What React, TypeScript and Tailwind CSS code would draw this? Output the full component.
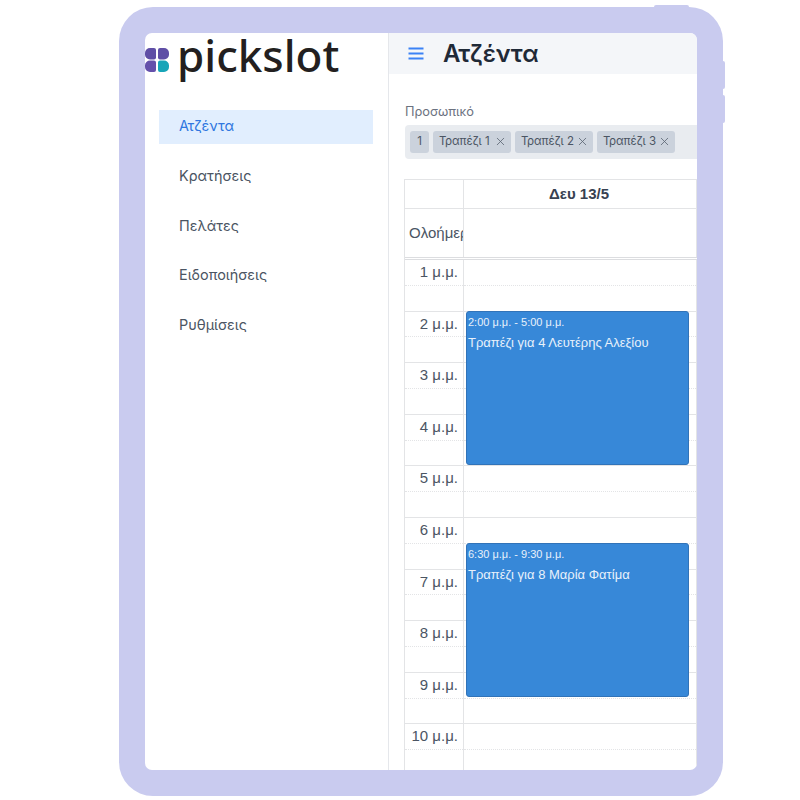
import { X } from "lucide-react";

const navItems = ["Ατζέντα", "Κρατήσεις", "Πελάτες", "Ειδοποιήσεις", "Ρυθμίσεις"];
const chips = ["Τραπέζι 1", "Τραπέζι 2", "Τραπέζι 3"];
const hours = ["1", "2", "3", "4", "5", "6", "7", "8", "9", "10"];

function Logo() {
  return (
    <div className="flex h-[54px] items-start">
      <svg width="24" height="26" viewBox="0 0 24 26" className="mr-[8px] mt-[14px] shrink-0">
        <path d="M0 6a5 5 0 0 1 5-5h4a2 2 0 0 1 2 2v7.5a2 2 0 0 1-2 2H5a5 5 0 0 1-5-5z" fill="#5f4ea6" />
        <path d="M24 6a5 5 0 0 0-5-5h-4a2 2 0 0 0-2 2v7.5a2 2 0 0 0 2 2h4a5 5 0 0 0 5-5z" fill="#5f4ea6" />
        <path d="M0 20a5 5 0 0 0 5 5h4a2 2 0 0 0 2-2v-7.5a2 2 0 0 0-2-2H5a5 5 0 0 0-5 5z" fill="#6450ab" />
        <path d="M24 20a5 5 0 0 1-5 5h-4a2 2 0 0 1-2-2v-7.5a2 2 0 0 1 2-2h4a5 5 0 0 1 5 5z" fill="#17a5b8" />
      </svg>
      <span className="font-['Noto_Sans',sans-serif] text-[44px] font-medium leading-[45px] text-[#231f20]">pickslot</span>
    </div>
  );
}

function EventCard({ time, title, top }: { time: string; title: string; top: string }) {
  return (
    <div className={`absolute left-[2px] ${top} h-[154px] w-[223px] rounded-[3px] border border-[#3173b8] bg-[#3788d8] px-[1px] text-[#e8f1fb]`}>
      <div className="mt-[3px] text-[11px] leading-[14px]">{time}</div>
      <div className="mt-[5px] text-[13px] leading-[17px]">{title}</div>
    </div>
  );
}

export default function App() {
  return (
    <div className="relative ml-[119px] mt-[7px] h-[789px] w-[604px] rounded-[34px] bg-[#c9cbef] p-[26px]">
      <div className="absolute left-[535px] top-[-2px] h-[3px] w-[35px] rounded-t-[2px] bg-[#c9cbef]" />
      <div className="absolute right-[-2px] top-[54px] h-[28px] w-[3px] rounded-r-[2px] bg-[#c9cbef]" />
      <div className="absolute right-[-2px] top-[88px] h-[28px] w-[3px] rounded-r-[2px] bg-[#c9cbef]" />

      <div className="flex h-[737px] w-[552px] overflow-hidden rounded-[7px] bg-white font-['Inter',sans-serif]">
        <aside className="w-[244px] shrink-0 border-r border-[#e5e7eb]">
          <Logo />
          <nav className="mt-[23px] flex flex-col gap-[15.7px] pl-[14px] pr-[15px]">
            {navItems.map((item, index) => (
              <div
                key={item}
                className={`flex h-[34px] items-center pb-[2px] pl-[20px] text-[14.4px] ${
                  index === 0 ? "bg-[#e1eefe] text-[#2f76e0]" : "text-[#4b5563]"
                }`}
              >
                {item}
              </div>
            ))}
          </nav>
        </aside>

        <main className="min-w-0 flex-1">
          <header className="flex h-[41px] items-center bg-[#f4f6f9] pl-[19px]">
            <svg width="16" height="13" viewBox="0 0 16 13" className="mr-[19px]">
              <path d="M0.5 1.5h15M0.5 6.5h15M0.5 11.5h15" stroke="#3b82f6" strokeWidth="2" />
            </svg>
            <h1 className="text-[24px] font-semibold leading-none text-[#1f2937]">Ατζέντα</h1>
          </header>

          <div className="pl-[16px]">
            <div className="mt-[30px] text-[12.8px] leading-[16px] text-[#6b7280]">Προσωπικό</div>
            <div className="mt-[5px] flex h-[34px] items-center gap-[4px] rounded-l-[4px] bg-[#e9ecf0] pl-[5px] text-[11.5px] text-[#4b5563]">
              <span className="flex h-[22px] w-[19px] items-center justify-center rounded-[3px] bg-[#cbd2dc]">1</span>
              {chips.map((chip) => (
                <span key={chip} className="flex h-[22px] w-[78px] items-center justify-between rounded-[3px] bg-[#cbd2dc] pl-[6px] pr-[4px]">
                  {chip}
                  <X size={13} strokeWidth={1.5} className="mb-[1px] text-[#5b6572]" />
                </span>
              ))}
            </div>

            <div className="-ml-[1px] mt-[20px] w-[293px] border-l border-t border-[#e3e4e6] font-['Liberation_Sans',sans-serif] text-[#4b5563]">
              <div className="flex h-[29px] border-b border-[#e3e4e6]">
                <div className="w-[59px] shrink-0 border-r border-[#e3e4e6]" />
                <div className="flex w-[233px] items-center justify-center border-r border-[#e3e4e6] pr-[2px] text-[15px] font-bold text-[#374151]">
                  Δευ 13/5
                </div>
              </div>
              <div className="flex h-[51px] border-b-[3px] border-double border-[#dcdde0]">
                <div className="flex w-[59px] shrink-0 items-center overflow-hidden whitespace-nowrap border-r border-[#e3e4e6] pl-[4px] text-[15px]">
                  Ολοήμερη
                </div>
                <div className="w-[233px] border-r border-[#e3e4e6]" />
              </div>

              <div className="relative flex">
                <div className="w-[59px] shrink-0 border-r border-[#e3e4e6]">
                  {hours.map((hour) => (
                    <div key={hour} className="h-[51.6px] border-b border-[#e3e4e6]">
                      <div className="h-[25.8px] border-b border-dotted border-[#e3e4e6] pr-[5px] pt-[3px] text-right text-[15px] leading-[18px]">
                        {hour} μ.μ.
                      </div>
                    </div>
                  ))}
                </div>
                <div className="relative w-[233px] border-r border-[#e3e4e6]">
                  {hours.map((hour) => (
                    <div key={hour} className="h-[51.6px] border-b border-[#e3e4e6]">
                      <div className="h-[25.8px] border-b border-dotted border-[#e3e4e6]" />
                    </div>
                  ))}
                  <EventCard top="top-[51px]" time="2:00 μ.μ. - 5:00 μ.μ." title="Τραπέζι για 4 Λευτέρης Αλεξίου" />
                  <EventCard top="top-[283px]" time="6:30 μ.μ. - 9:30 μ.μ." title="Τραπέζι για 8 Μαρία Φατίμα" />
                </div>
              </div>
            </div>
          </div>
        </main>
      </div>
    </div>
  );
}
